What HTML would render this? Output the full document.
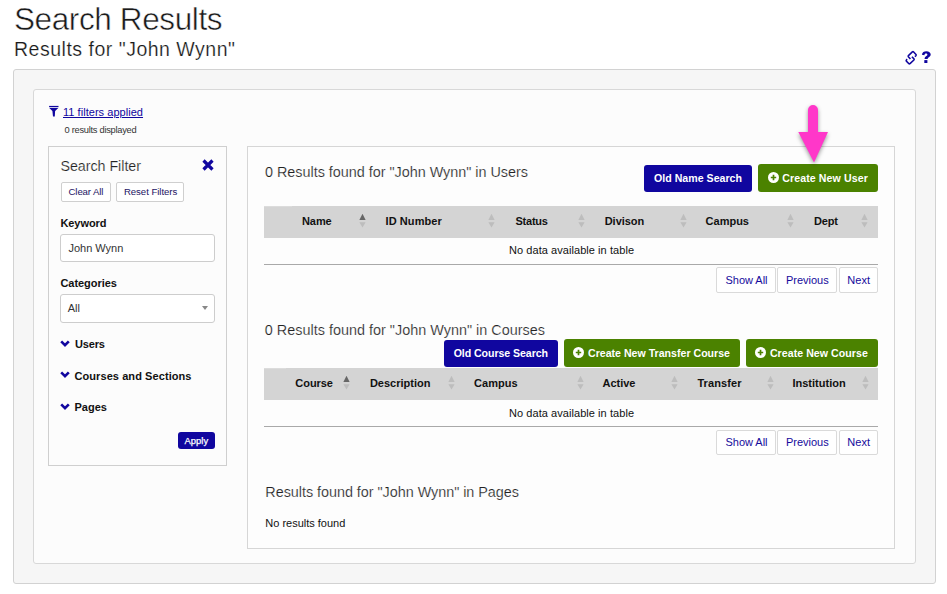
<!DOCTYPE html>
<html><head><meta charset="utf-8"><title>Search Results</title>
<style>
html,body{margin:0;padding:0;background:#fff;}
body{width:947px;height:594px;position:relative;overflow:hidden;font-family:"Liberation Sans",sans-serif;}
.t{position:absolute;white-space:nowrap;line-height:1;font-family:"Liberation Sans",sans-serif;}
.box{position:absolute;box-sizing:border-box;}
.outer{left:13px;top:69px;width:923px;height:515px;background:#f6f6f6;border:1px solid #d2d2d2;border-radius:3px;}
.inner{left:33px;top:89px;width:883px;height:475px;background:#fcfcfc;border:1px solid #d8d8d8;border-radius:3px;}
.fpanel{left:48px;top:146px;width:179px;height:320px;background:#fcfcfc;border:1px solid #cfcfcf;}
.rpanel{left:247px;top:146px;width:648px;height:403px;background:#fdfdfd;border:1px solid #d6d6d6;}
.wbtn{position:absolute;box-sizing:border-box;background:#fff;border:1px solid #cfcfcf;border-radius:2px;}
.input{position:absolute;box-sizing:border-box;background:#fff;border:1px solid #cdcdcd;border-radius:3px;}
.bbtn{position:absolute;background:#10069f;border-radius:3px;}
.gbtn{position:absolute;background:#4b8200;border-radius:3px;}
.thead{position:absolute;background:#d4d4d4;}
.hline{position:absolute;height:1px;background:#a9a9a9;}
.sa,.pi,.ch{position:absolute;line-height:0;}
.pbtn{position:absolute;box-sizing:border-box;background:#fff;border:1px solid #dadada;border-radius:2px;}
</style></head><body>
<div class="box outer"></div>
<div class="box inner"></div>
<div class="box fpanel"></div>
<div class="box rpanel"></div>

<!-- top-right icons -->
<div style="position:absolute;left:902px;top:48px;line-height:0">
<svg width="18" height="19" viewBox="0 0 18 19"><g fill="none" stroke="#10069f" stroke-width="1.8" stroke-linejoin="round" stroke-linecap="butt" transform="translate(9.3 9.8) scale(0.87) translate(-9.4 -9.9)"><path d="M8.4 11.3L6 8.7Q5.5 8 6.1 7.4L10.6 3.1Q11.4 2.5 12.1 3.2L14.8 6.1Q15.3 6.8 14.7 7.5L13.5 8.6"/><path d="M10.1 8.6L12.5 11.1Q13 11.8 12.4 12.4L7.9 16.6Q7.1 17.2 6.4 16.5L3.7 13.7Q3.2 13 3.8 12.3L4.6 11.4"/></g></svg></div>
<div style="position:absolute;left:921px;top:50px;line-height:0">
<svg width="11" height="14" viewBox="0 0 11 14"><path d="M0.9 4.8C1.1 2.3 3.1 1.3 5.4 1.3c2.5 0 4.3 1.3 4.3 3.3 0 2.6-3 2.7-3 4.4H3.6c0-3.1 2.8-2.9 2.8-4.3 0-0.8-0.6-1.2-1.4-1.2-0.9 0-1.5 0.5-1.6 1.7z" fill="#10069f"/><rect x="3.3" y="10.1" width="3.1" height="2.9" fill="#10069f"/></svg></div>

<!-- filter summary icon -->
<div style="position:absolute;left:49px;top:105px;line-height:0">
<svg width="10" height="12" viewBox="0 0 10 12"><rect x="0.1" y="0.9" width="9.4" height="1.3" fill="#10069f"/><path d="M0.3 3.0H9.3L6.1 6.1L5.8 11.5H4.0L3.4 6.1Z" fill="#10069f"/></svg></div>

<!-- close X -->
<div style="position:absolute;left:202px;top:159px;line-height:0">
<svg width="12" height="12" viewBox="0 0 12 12"><path d="M1.5 1.5L10.5 10.5M10.5 1.5L1.5 10.5" stroke="#10069f" stroke-width="3.2"/></svg></div>

<div class="wbtn" style="left:61px;top:182px;width:50px;height:20px;"></div>
<div class="wbtn" style="left:116px;top:182px;width:68px;height:20px;"></div>
<div class="input" style="left:60px;top:234px;width:155px;height:28px;"></div>
<div class="input" style="left:60px;top:294px;width:155px;height:29px;"></div>
<div style="position:absolute;left:201.5px;top:305.5px;width:0;height:0;border-left:3.5px solid transparent;border-right:3.5px solid transparent;border-top:4.5px solid #888;"></div>
<div class="bbtn" style="left:178px;top:432px;width:37px;height:17px;"></div>

<!-- users -->
<div class="bbtn" style="left:644px;top:165px;width:108px;height:27px;"></div>
<div class="gbtn" style="left:758px;top:164px;width:120px;height:28px;"></div>
<div class="thead" style="left:264px;top:206px;width:614px;height:32px;"></div>
<div style="position:absolute;left:264px;top:206px;width:28px;height:1px;background:#dcdcdc;"></div>
<div class="hline" style="left:264px;top:264px;width:614px;"></div>
<div class="pbtn" style="left:716px;top:267px;width:60px;height:26px;"></div>
<div class="pbtn" style="left:777px;top:267px;width:60px;height:26px;"></div>
<div class="pbtn" style="left:839px;top:267px;width:39px;height:26px;"></div>

<!-- courses -->
<div class="bbtn" style="left:444px;top:340px;width:114px;height:27px;"></div>
<div class="gbtn" style="left:564px;top:339px;width:176px;height:28px;"></div>
<div class="gbtn" style="left:746px;top:339px;width:132px;height:28px;"></div>
<div class="thead" style="left:264px;top:368px;width:614px;height:32px;"></div>
<div style="position:absolute;left:264px;top:368px;width:22px;height:1px;background:#dcdcdc;"></div>
<div class="hline" style="left:264px;top:426px;width:614px;"></div>
<div class="pbtn" style="left:716px;top:430px;width:60px;height:25px;"></div>
<div class="pbtn" style="left:777px;top:430px;width:60px;height:25px;"></div>
<div class="pbtn" style="left:839px;top:430px;width:39px;height:25px;"></div>

<div class="sa" style="left:359.4px;top:214px"><svg width="7" height="15" viewBox="0 0 7 15"><path d="M3.5 -0.3L6.6 6.1H0.4Z" fill="#666"/><path d="M3.5 13.6L6.6 8.2H0.4Z" fill="#bdbdbd"/></svg></div>
<div class="sa" style="left:487.9px;top:214px"><svg width="7" height="15" viewBox="0 0 7 15"><path d="M3.5 -0.3L6.6 6.1H0.4Z" fill="#bdbdbd"/><path d="M3.5 13.6L6.6 8.2H0.4Z" fill="#bdbdbd"/></svg></div>
<div class="sa" style="left:578.4px;top:214px"><svg width="7" height="15" viewBox="0 0 7 15"><path d="M3.5 -0.3L6.6 6.1H0.4Z" fill="#bdbdbd"/><path d="M3.5 13.6L6.6 8.2H0.4Z" fill="#bdbdbd"/></svg></div>
<div class="sa" style="left:679.9px;top:214px"><svg width="7" height="15" viewBox="0 0 7 15"><path d="M3.5 -0.3L6.6 6.1H0.4Z" fill="#bdbdbd"/><path d="M3.5 13.6L6.6 8.2H0.4Z" fill="#bdbdbd"/></svg></div>
<div class="sa" style="left:787.4px;top:214px"><svg width="7" height="15" viewBox="0 0 7 15"><path d="M3.5 -0.3L6.6 6.1H0.4Z" fill="#bdbdbd"/><path d="M3.5 13.6L6.6 8.2H0.4Z" fill="#bdbdbd"/></svg></div>
<div class="sa" style="left:861.4px;top:214px"><svg width="7" height="15" viewBox="0 0 7 15"><path d="M3.5 -0.3L6.6 6.1H0.4Z" fill="#bdbdbd"/><path d="M3.5 13.6L6.6 8.2H0.4Z" fill="#bdbdbd"/></svg></div>
<div class="sa" style="left:343.2px;top:376px"><svg width="7" height="15" viewBox="0 0 7 15"><path d="M3.5 -0.3L6.6 6.1H0.4Z" fill="#666"/><path d="M3.5 13.6L6.6 8.2H0.4Z" fill="#bdbdbd"/></svg></div>
<div class="sa" style="left:448.2px;top:376px"><svg width="7" height="15" viewBox="0 0 7 15"><path d="M3.5 -0.3L6.6 6.1H0.4Z" fill="#bdbdbd"/><path d="M3.5 13.6L6.6 8.2H0.4Z" fill="#bdbdbd"/></svg></div>
<div class="sa" style="left:576.9px;top:376px"><svg width="7" height="15" viewBox="0 0 7 15"><path d="M3.5 -0.3L6.6 6.1H0.4Z" fill="#bdbdbd"/><path d="M3.5 13.6L6.6 8.2H0.4Z" fill="#bdbdbd"/></svg></div>
<div class="sa" style="left:671.2px;top:376px"><svg width="7" height="15" viewBox="0 0 7 15"><path d="M3.5 -0.3L6.6 6.1H0.4Z" fill="#bdbdbd"/><path d="M3.5 13.6L6.6 8.2H0.4Z" fill="#bdbdbd"/></svg></div>
<div class="sa" style="left:766.7px;top:376px"><svg width="7" height="15" viewBox="0 0 7 15"><path d="M3.5 -0.3L6.6 6.1H0.4Z" fill="#bdbdbd"/><path d="M3.5 13.6L6.6 8.2H0.4Z" fill="#bdbdbd"/></svg></div>
<div class="sa" style="left:861.7px;top:376px"><svg width="7" height="15" viewBox="0 0 7 15"><path d="M3.5 -0.3L6.6 6.1H0.4Z" fill="#bdbdbd"/><path d="M3.5 13.6L6.6 8.2H0.4Z" fill="#bdbdbd"/></svg></div>
<div class="pi" style="left:767.6px;top:172.2px"><svg width="11" height="11" viewBox="0 0 11 11"><circle cx="5.5" cy="5.5" r="5.5" fill="#fff"/><path d="M5.5 2.8V8.2M2.8 5.5H8.2" stroke="#4b8200" stroke-width="1.7"/></svg></div>
<div class="pi" style="left:573.3px;top:347.3px"><svg width="11" height="11" viewBox="0 0 11 11"><circle cx="5.5" cy="5.5" r="5.5" fill="#fff"/><path d="M5.5 2.8V8.2M2.8 5.5H8.2" stroke="#4b8200" stroke-width="1.7"/></svg></div>
<div class="pi" style="left:755.2px;top:347.3px"><svg width="11" height="11" viewBox="0 0 11 11"><circle cx="5.5" cy="5.5" r="5.5" fill="#fff"/><path d="M5.5 2.8V8.2M2.8 5.5H8.2" stroke="#4b8200" stroke-width="1.7"/></svg></div>
<div class="ch" style="left:60px;top:339.5px"><svg width="10" height="7" viewBox="0 0 10 7"><path d="M1.2 1.3L5 5.1L8.8 1.3" fill="none" stroke="#10069f" stroke-width="2.6"/></svg></div>
<div class="ch" style="left:60px;top:371.4px"><svg width="10" height="7" viewBox="0 0 10 7"><path d="M1.2 1.3L5 5.1L8.8 1.3" fill="none" stroke="#10069f" stroke-width="2.6"/></svg></div>
<div class="ch" style="left:60px;top:402.5px"><svg width="10" height="7" viewBox="0 0 10 7"><path d="M1.2 1.3L5 5.1L8.8 1.3" fill="none" stroke="#10069f" stroke-width="2.6"/></svg></div>

<span class="t" id="t0" style="left:14px;top:3.84px;font-size:31.5px;font-weight:normal;color:#1a1a1a;-webkit-text-stroke:0.5px #fff;letter-spacing:-0.393px;">Search Results</span>
<span class="t" id="t1" style="left:14px;top:40.39px;font-size:19.5px;font-weight:normal;color:#1a1a1a;-webkit-text-stroke:0.2px #fff;letter-spacing:0.507px;">Results for &quot;John Wynn&quot;</span>
<span class="t" id="t2" style="left:63px;top:107.19px;font-size:11px;font-weight:normal;color:#10069f;text-decoration:underline;letter-spacing:0.041px;">11 filters applied</span>
<span class="t" id="t3" style="left:64.6px;top:125.93px;font-size:9.3px;font-weight:normal;color:#333;letter-spacing:-0.278px;">0 results displayed</span>
<span class="t" id="t4" style="left:60.4px;top:158.90px;font-size:14.3px;font-weight:normal;color:#222;-webkit-text-stroke:0.2px #fbfbfb;letter-spacing:-0.037px;">Search Filter</span>
<span class="t" id="t5" style="left:68.5px;top:186.97px;font-size:9.6px;font-weight:normal;color:#1d1464;letter-spacing:-0.092px;">Clear All</span>
<span class="t" id="t6" style="left:123.9px;top:186.97px;font-size:9.6px;font-weight:normal;color:#1d1464;letter-spacing:-0.037px;">Reset Filters</span>
<span class="t" id="t7" style="left:60.4px;top:217.89px;font-size:11px;font-weight:bold;color:#111;letter-spacing:-0.061px;">Keyword</span>
<span class="t" id="t8" style="left:68.5px;top:242.69px;font-size:11px;font-weight:normal;color:#333;letter-spacing:-0.017px;">John Wynn</span>
<span class="t" id="t9" style="left:60.4px;top:278.09px;font-size:11px;font-weight:bold;color:#111;letter-spacing:-0.029px;">Categories</span>
<span class="t" id="t10" style="left:67.7px;top:302.69px;font-size:11px;font-weight:normal;color:#333;">All</span>
<span class="t" id="t11" style="left:74.9px;top:338.59px;font-size:11px;font-weight:bold;color:#111;letter-spacing:-0.145px;">Users</span>
<span class="t" id="t12" style="left:74.5px;top:371.29px;font-size:11px;font-weight:bold;color:#111;letter-spacing:0.076px;">Courses and Sections</span>
<span class="t" id="t13" style="left:74.5px;top:402.29px;font-size:11px;font-weight:bold;color:#111;">Pages</span>
<span class="t" id="t14" style="left:184.4px;top:435.74px;font-size:9.4px;font-weight:normal;color:#fff;-webkit-text-stroke:0.25px #fff;letter-spacing:0.087px;">Apply</span>
<span class="t" id="t15" style="left:265px;top:164.81px;font-size:14.4px;font-weight:normal;color:#222;-webkit-text-stroke:0.2px #fdfdfd;letter-spacing:-0.017px;">0 Results found for &quot;John Wynn&quot; in Users</span>
<span class="t" id="t16" style="left:654px;top:172.93px;font-size:10.6px;font-weight:bold;color:#fff;letter-spacing:0.019px;">Old Name Search</span>
<span class="t" id="t17" style="left:782.3px;top:172.73px;font-size:10.6px;font-weight:bold;color:#fff;letter-spacing:0.093px;">Create New User</span>
<span class="t" id="t18" style="left:302px;top:215.89px;font-size:11px;font-weight:bold;color:#111;letter-spacing:-0.090px;">Name</span>
<span class="t" id="t19" style="left:385.5px;top:215.89px;font-size:11px;font-weight:bold;color:#111;letter-spacing:0.084px;">ID Number</span>
<span class="t" id="t20" style="left:515.4px;top:215.89px;font-size:11px;font-weight:bold;color:#111;letter-spacing:-0.205px;">Status</span>
<span class="t" id="t21" style="left:604.7px;top:215.89px;font-size:11px;font-weight:bold;color:#111;letter-spacing:-0.022px;">Divison</span>
<span class="t" id="t22" style="left:705.6px;top:215.89px;font-size:11px;font-weight:bold;color:#111;letter-spacing:-0.001px;">Campus</span>
<span class="t" id="t23" style="left:814px;top:215.89px;font-size:11px;font-weight:bold;color:#111;letter-spacing:-0.151px;">Dept</span>
<span class="t" id="t24" style="left:509px;top:244.69px;font-size:11px;font-weight:normal;color:#111;letter-spacing:0.059px;">No data available in table</span>
<span class="t" id="t25" style="left:725.5px;top:275.29px;font-size:11px;font-weight:normal;color:#150b9c;letter-spacing:-0.029px;">Show All</span>
<span class="t" id="t26" style="left:786px;top:275.29px;font-size:11px;font-weight:normal;color:#150b9c;letter-spacing:-0.014px;">Previous</span>
<span class="t" id="t27" style="left:847.3px;top:275.29px;font-size:11px;font-weight:normal;color:#150b9c;letter-spacing:0.025px;">Next</span>
<span class="t" id="t28" style="left:264.8px;top:323.21px;font-size:14.4px;font-weight:normal;color:#222;-webkit-text-stroke:0.2px #fdfdfd;letter-spacing:0.013px;">0 Results found for &quot;John Wynn&quot; in Courses</span>
<span class="t" id="t29" style="left:453.7px;top:348.03px;font-size:10.6px;font-weight:bold;color:#fff;letter-spacing:-0.067px;">Old Course Search</span>
<span class="t" id="t30" style="left:588px;top:348.13px;font-size:10.6px;font-weight:bold;color:#fff;letter-spacing:0.004px;">Create New Transfer Course</span>
<span class="t" id="t31" style="left:769.9px;top:348.13px;font-size:10.6px;font-weight:bold;color:#fff;letter-spacing:0.046px;">Create New Course</span>
<span class="t" id="t32" style="left:295.3px;top:377.69px;font-size:11px;font-weight:bold;color:#111;letter-spacing:-0.041px;">Course</span>
<span class="t" id="t33" style="left:369.9px;top:377.69px;font-size:11px;font-weight:bold;color:#111;letter-spacing:0.008px;">Description</span>
<span class="t" id="t34" style="left:474px;top:377.69px;font-size:11px;font-weight:bold;color:#111;letter-spacing:0.039px;">Campus</span>
<span class="t" id="t35" style="left:602.5px;top:377.69px;font-size:11px;font-weight:bold;color:#111;letter-spacing:-0.006px;">Active</span>
<span class="t" id="t36" style="left:697.4px;top:377.69px;font-size:11px;font-weight:bold;color:#111;letter-spacing:0.111px;">Transfer</span>
<span class="t" id="t37" style="left:792.4px;top:377.69px;font-size:11px;font-weight:bold;color:#111;letter-spacing:0.014px;">Institution</span>
<span class="t" id="t38" style="left:509px;top:407.69px;font-size:11px;font-weight:normal;color:#111;letter-spacing:0.059px;">No data available in table</span>
<span class="t" id="t39" style="left:725.5px;top:436.69px;font-size:11px;font-weight:normal;color:#150b9c;letter-spacing:-0.029px;">Show All</span>
<span class="t" id="t40" style="left:786px;top:436.69px;font-size:11px;font-weight:normal;color:#150b9c;letter-spacing:-0.014px;">Previous</span>
<span class="t" id="t41" style="left:847.3px;top:436.69px;font-size:11px;font-weight:normal;color:#150b9c;letter-spacing:0.025px;">Next</span>
<span class="t" id="t42" style="left:265.3px;top:485.01px;font-size:14.4px;font-weight:normal;color:#222;-webkit-text-stroke:0.2px #fdfdfd;letter-spacing:-0.032px;">Results found for &quot;John Wynn&quot; in Pages</span>
<span class="t" id="t43" style="left:265.3px;top:518.09px;font-size:11px;font-weight:normal;color:#111;letter-spacing:-0.007px;">No results found</span>

<!-- pink arrow -->
<div style="position:absolute;left:792px;top:100px;line-height:0;filter:drop-shadow(0 2px 2px rgba(0,0,0,0.4));">
<svg width="44" height="66" viewBox="0 0 44 66"><path d="M16 10a5 5 0 0 1 10 0V32H36L22 62.5L6.3 32H16Z" fill="#ff37c9"/></svg></div>
</body></html>
